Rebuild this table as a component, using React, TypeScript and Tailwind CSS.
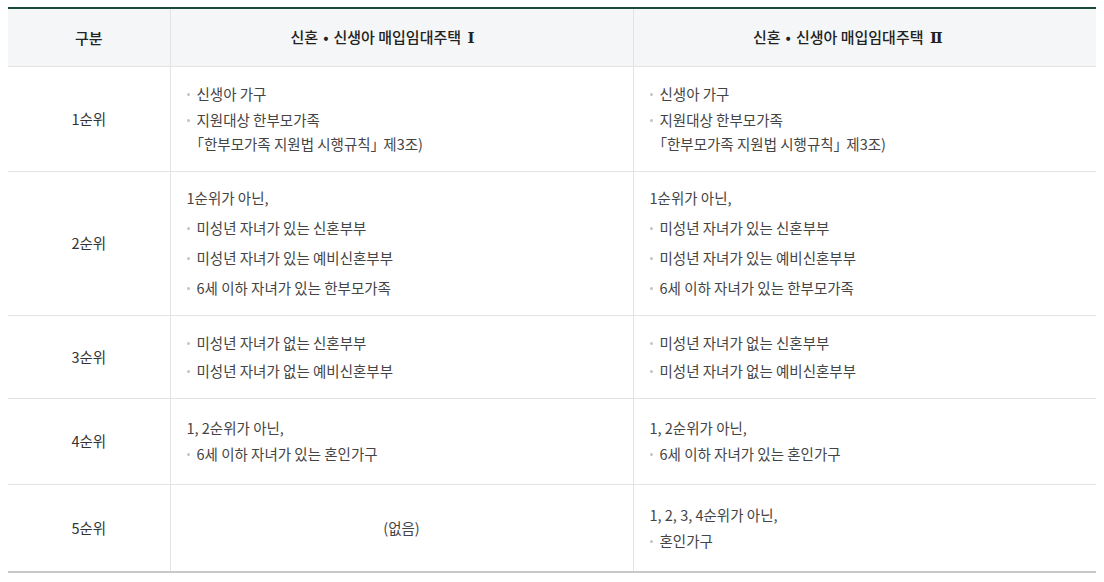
import React from "react";

type Item = { type: "p" | "li"; text: React.ReactNode };

const Dot = () => <span className="mt-[11px] mr-[7px] h-[3px] w-[3px] shrink-0 rounded-full bg-[#c4c4c4]" />;

function Cell({ items, gap, pad }: { items: Item[] | null; gap: string; pad: string }) {
  if (!items) {
    return (
      <td className={"border-l border-b border-[#e3e3e3] px-4 text-center align-middle leading-[24px] text-[#444] " + pad}>(없음)</td>
    );
  }
  return (
    <td className={"border-l border-b border-[#e3e3e3] px-4 align-middle text-[#444] " + pad}>
      <div className={"flex flex-col " + gap}>
        {items.map((it, i) =>
          it.type === "p" ? (
            <p key={i} className="leading-[24px]">{it.text}</p>
          ) : (
            <div key={i} className="flex leading-[24px]">
              <Dot />
              <span>{it.text}</span>
            </div>
          )
        )}
      </div>
    </td>
  );
}

const hanbumo: Item[] = [
  { type: "li", text: "신생아 가구" },
  {
    type: "li",
    text: (
      <>
        지원대상 한부모가족
        <br />
        <span className="-ml-[7px]">「</span>한부모가족 지원법 시행규칙<span className="tracking-[-5px]">」</span> 제3조)
      </>
    ),
  },
];

const rank2: Item[] = [
  { type: "p", text: "1순위가 아닌," },
  { type: "li", text: "미성년 자녀가 있는 신혼부부" },
  { type: "li", text: "미성년 자녀가 있는 예비신혼부부" },
  { type: "li", text: "6세 이하 자녀가 있는 한부모가족" },
];

const rank3: Item[] = [
  { type: "li", text: "미성년 자녀가 없는 신혼부부" },
  { type: "li", text: "미성년 자녀가 없는 예비신혼부부" },
];

const rank4: Item[] = [
  { type: "p", text: "1, 2순위가 아닌," },
  { type: "li", text: "6세 이하 자녀가 있는 혼인가구" },
];

const rank5: Item[] = [
  { type: "p", text: "1, 2, 3, 4순위가 아닌," },
  { type: "li", text: "혼인가구" },
];

const rows: { label: string; a: Item[] | null; b: Item[] | null; gap: string; pad: string }[] = [
  { label: "1순위", a: hanbumo, b: hanbumo, gap: "gap-[2px]", pad: "py-[15px]" },
  { label: "2순위", a: rank2, b: rank2, gap: "gap-[6px]", pad: "pt-[14px] pb-[15px]" },
  { label: "3순위", a: rank3, b: rank3, gap: "gap-[4px]", pad: "py-[15px]" },
  { label: "4순위", a: rank4, b: rank4, gap: "gap-[2px]", pad: "pt-[17px] pb-[18px]" },
  { label: "5순위", a: null, b: rank5, gap: "gap-[2px]", pad: "py-[18px]" },
];

const Title = ({ num }: { num: string }) => (
  <>
    신혼<span className="mx-[5px] inline-block">•</span>신생아 매입임대주택{" "}
    <span className="ml-[3px] font-bold" style={{ fontFamily: '"DejaVu Serif", serif' }}>
      {num}
    </span>
  </>
);

export default function App() {
  return (
    <div
      className="min-h-[582px] bg-white p-2 pt-[7px] text-[14.5px]"
      style={{ fontFamily: '"Noto Sans CJK KR", "Noto Sans", sans-serif' }}
    >
      <table className="w-full table-fixed border-collapse border-t-2 border-b-2 border-t-[#1a4a38] border-b-[#c8c8c8]">
        <colgroup>
          <col className="w-[162px]" />
          <col />
          <col />
        </colgroup>
        <thead>
          <tr className="bg-[#f5f6f7]">
            <th className="border-b border-[#e3e3e3] py-4 text-center text-[15px] font-medium leading-[24px] text-[#222]">구분</th>
            <th className="border-l border-b border-[#e3e3e3] py-4 pr-[38px] text-center text-[15px] font-medium leading-[24px] text-[#222]">
              <Title num="Ⅰ" />
            </th>
            <th className="border-l border-b border-[#e3e3e3] py-4 pr-[34px] text-center text-[15px] font-medium leading-[24px] text-[#222]">
              <Title num="Ⅱ" />
            </th>
          </tr>
        </thead>
        <tbody>
          {rows.map((r) => (
            <tr key={r.label}>
              <td className={"border-b border-[#e3e3e3] text-center align-middle leading-[24px] text-[#333] " + r.pad}>
                {r.label}
              </td>
              <Cell items={r.a} gap={r.gap} pad={r.pad} />
              <Cell items={r.b} gap={r.gap} pad={r.pad} />
            </tr>
          ))}
        </tbody>
      </table>
    </div>
  );
}
